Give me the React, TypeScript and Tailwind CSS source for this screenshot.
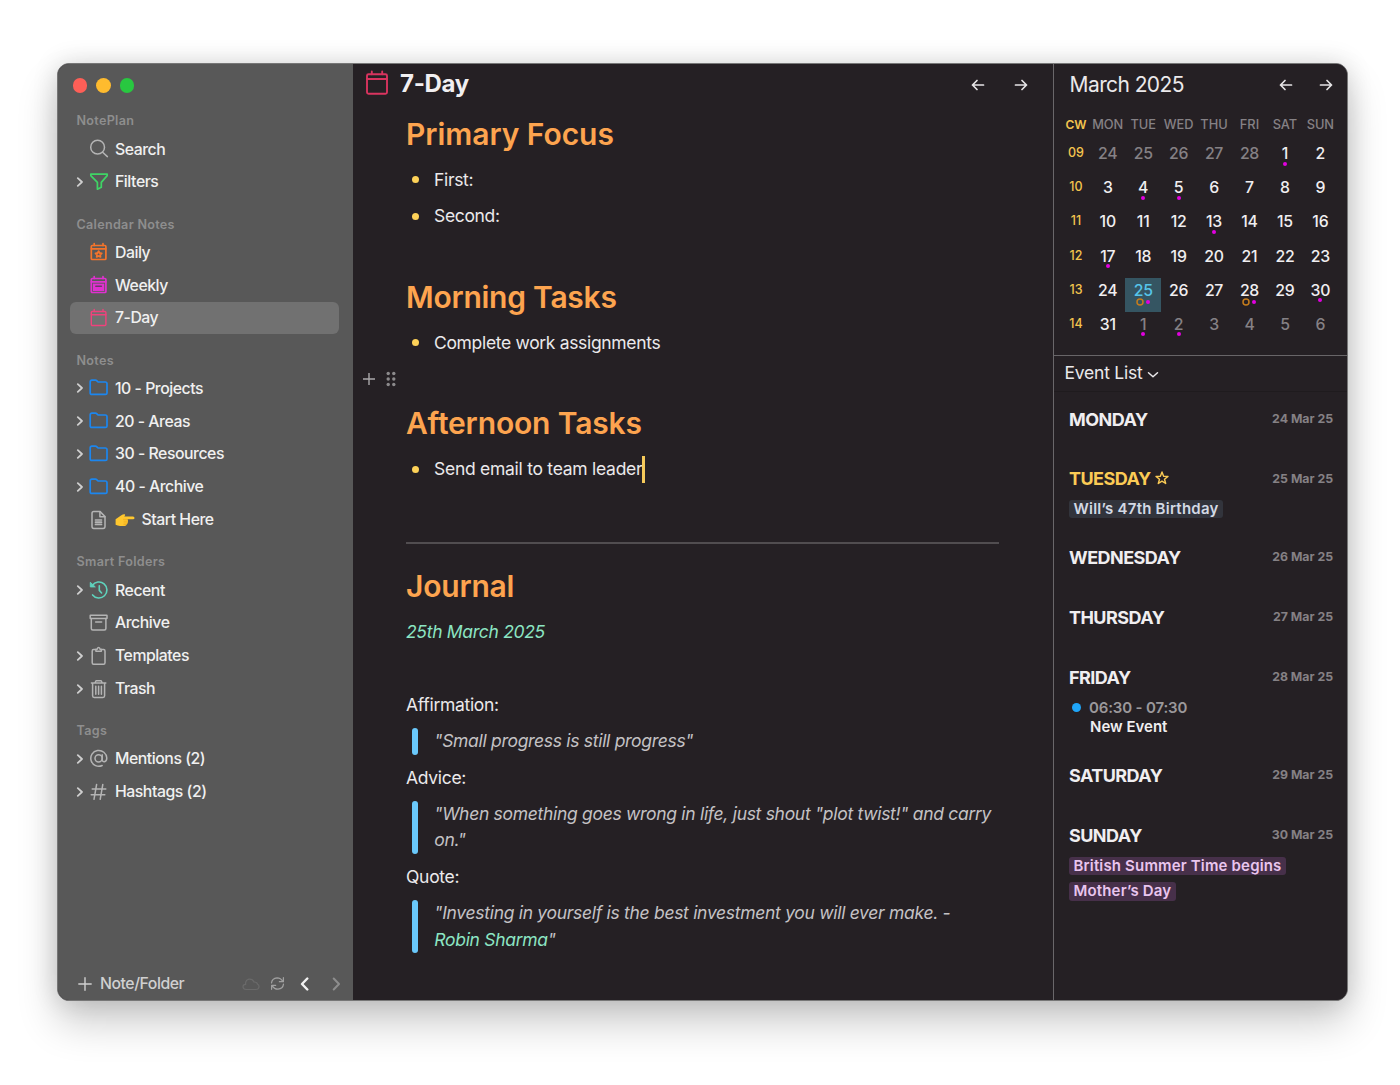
import React from "react";

type IconProps = { className?: string };

const Chevron = ({ className = "" }: IconProps) => (
  <svg viewBox="0 0 8 12" className={className} fill="none" stroke="currentColor" strokeWidth="1.8" strokeLinecap="round" strokeLinejoin="round">
    <path d="M1.8 2.2 6 6 1.8 9.8" />
  </svg>
);

const svgBase = {
  viewBox: "0 0 20 20",
  fill: "none",
  stroke: "currentColor",
  strokeWidth: 1.5,
  strokeLinecap: "round" as const,
  strokeLinejoin: "round" as const,
};

const icons: Record<string, React.ReactNode> = {
  search: (
    <svg {...svgBase} className="size-5 text-[#b4b4b4]">
      <circle cx="8.6" cy="8.2" r="6.9" />
      <path d="M13.6 13.2 18.4 17.6" />
    </svg>
  ),
  filter: (
    <svg {...svgBase} strokeWidth="1.7" className="size-5 text-[#3fd465]">
      <path d="M1.8 2.2H18.2V3.6L12.3 10.4V15.2L8.4 17.2V10.4L1.8 3.6Z" />
    </svg>
  ),
  daily: (
    <svg {...svgBase} strokeWidth="1.7" className="size-5 text-[#f4742b]">
      <rect x="2.3" y="3.5" width="14.6" height="14" rx="1" />
      <path d="M2.3 6.8H16.900M5.200 1.500V3.500M14 1.500V3.500" />
      <path d="m9.600 9.100 1 1.900 2.100.3-1.500 1.500.3 2.100L9.600 14l-1.900.9.3-2.100-1.500-1.500 2.100-.3Z" strokeWidth="1.800" />
    </svg>
  ),
  weekly: (
    <svg {...svgBase} strokeWidth="1.7" className="size-5 text-[#df31cf]">
      <rect x="2.3" y="3.5" width="14.6" height="14" rx="1" />
      <path d="M2.3 6.8H16.900M5.200 1.500V3.500M14 1.500V3.500" />
      <rect x="3.900" y="8.600" width="11.400" height="7.400" fill="currentColor" stroke="none" />
      <path d="M6.800 11.200H12.400" stroke="#6a3868" strokeWidth="1.500" />
    </svg>
  ),
  sevenDay: (
    <svg {...svgBase} strokeWidth="1.4" className="size-5 text-[#f0427c]">
      <rect x="2.3" y="3.5" width="14.6" height="14" rx="1" />
      <path d="M2.3 6.8H16.900M5.200 1.500V3.500M14 1.500V3.500" />
    </svg>
  ),
  folder: (
    <svg {...svgBase} strokeWidth="1.7" className="size-5 text-[#1c86ee]">
      <path d="M1.2 14.9V3.9Q1.2 2.2 2.9 2.2H6.5Q7.3 2.2 7.9 2.8L9.1 4H16.3Q18 4 18 5.7V14.9Q18 16.4 16.4 16.4H2.8Q1.2 16.4 1.2 14.9Z" />
    </svg>
  ),
  doc: (
    <svg {...svgBase} className="size-5 text-[#b4b4b4]">
      <path d="M4.700 1.600H11.100L16 6.500V16.600Q16 18.400 14.200 18.400H4.700Q3 18.400 3 16.600V3.400Q3 1.600 4.700 1.600Z" />
      <path d="M10.900 1.800V6.700H15.800" />
      <path d="M6.500 10H12.500M6.500 12.200H12.500M6.500 14.400H12.500" strokeWidth="1.700" />
    </svg>
  ),
  recent: (
    <svg {...svgBase} strokeWidth="1.6" className="size-5 text-[#5fd3bd]">
      <path d="M3.3 5.500A8 8 0 1 1 3.600 14.900" />
      <path d="M1.300 2.700V6.900H5.900Z" fill="currentColor" strokeWidth="1" />
      <path d="M10.300 5.800V10.400L12.600 13" />
    </svg>
  ),
  archive: (
    <svg {...svgBase} className="size-5 text-[#b4b4b4]">
      <rect x="1.200" y="2.200" width="16.800" height="3.400" rx=".4" />
      <path d="M2.300 5.600V15.600Q2.300 17.100 3.800 17.100H15.400Q16.900 17.100 16.900 15.600V5.600" />
      <path d="M6.600 9.100H12.600" />
    </svg>
  ),
  template: (
    <svg {...svgBase} className="size-5 text-[#b4b4b4]">
      <path d="M6.600 3.500H4.600Q3.200 3.500 3.200 5V16.800Q3.200 18.300 4.600 18.300H14.600Q16 18.300 16 16.800V5Q16 3.500 14.600 3.500H12.600" />
      <path d="M6.900 5.200V3.300H8.200Q8.300 1.400 9.600 1.400T11 3.300H12.300V5.200Z" />
    </svg>
  ),
  trash: (
    <svg {...svgBase} className="size-5 text-[#b4b4b4]">
      <path d="M2.400 4.100H16.800M5.900 4 7 1.700H12.200L13.300 4M3.600 4.300V16.700Q3.600 18.400 5.200 18.400H14Q15.600 18.400 15.600 16.700V4.300" />
      <path d="M6.800 7.300V15.200M9.600 7.300V15.200M12.400 7.300V15.200" />
    </svg>
  ),
  at: (
    <svg {...svgBase} className="size-5 text-[#b4b4b4]">
      <circle cx="9.600" cy="9.300" r="3.600" />
      <path d="M13.200 5.800V10.600Q13.400 12.900 15.400 12.700Q17.800 12.300 17.800 9.100A8 7.900 0 1 0 13.200 16.500" />
    </svg>
  ),
  hash: (
    <svg {...svgBase} className="size-5 text-[#b4b4b4]">
      <path d="M3.200 6.900H16.800M2.200 12.800H15.800M7.600 2.500 5 17.300M13.800 2.500 11.200 17.300" />
    </svg>
  ),
};

const PointingHand = () => (
  <svg viewBox="0 0 20 14" className="mr-[6.5px] h-[14px] w-5">
    <path d="M.6 6.200 6 2.600Q8.500.700 9.800 1.300Q10.700 2 9.500 3.300L9.200 3.600H18Q19.500 3.800 19.500 4.900T18 6.300H12.300Q13.400 7 12.900 8 13.400 9 12.500 9.900 12.600 11 11.600 11.500 11.400 12.700 9.800 12.900H5Q2.500 12.900.6 11.800Z" fill="#ffc72e" />
    <path d="M8 6.300H12.300M8.600 8.200H12.700M8.600 10H12.200M8.400 11.600H11.400" stroke="#e49a16" strokeWidth=".5" fill="none" />
  </svg>
);

type Item = { label: string; icon: string; chev?: boolean; active?: boolean; hand?: boolean };

const sections: { title: string; items: Item[] }[] = [
  { title: "NotePlan", items: [
    { label: "Search", icon: "search" },
    { label: "Filters", icon: "filter", chev: true },
  ] },
  { title: "Calendar Notes", items: [
    { label: "Daily", icon: "daily" },
    { label: "Weekly", icon: "weekly" },
    { label: "7-Day", icon: "sevenDay", active: true },
  ] },
  { title: "Notes", items: [
    { label: "10 - Projects", icon: "folder", chev: true },
    { label: "20 - Areas", icon: "folder", chev: true },
    { label: "30 - Resources", icon: "folder", chev: true },
    { label: "40 - Archive", icon: "folder", chev: true },
    { label: "Start Here", icon: "doc", hand: true },
  ] },
  { title: "Smart Folders", items: [
    { label: "Recent", icon: "recent", chev: true },
    { label: "Archive", icon: "archive" },
    { label: "Templates", icon: "template", chev: true },
    { label: "Trash", icon: "trash", chev: true },
  ] },
  { title: "Tags", items: [
    { label: "Mentions (2)", icon: "at", chev: true },
    { label: "Hashtags (2)", icon: "hash", chev: true },
  ] },
];

function Sidebar() {
  return (
    <aside className="flex w-[295px] shrink-0 flex-col bg-[#585858]">
      <div className="flex h-[31px] items-end gap-[9px] pb-[2.500px] pl-[14.6px]">
        <span className="size-[14.5px] rounded-full bg-[#fe5f57]" />
        <span className="size-[14.5px] rounded-full bg-[#febb2e]" />
        <span className="size-[14.5px] rounded-full bg-[#28c840]" />
      </div>
      <nav>
        {sections.map((s) => (
          <section key={s.title}>
            <h3 className="flex h-[37.7px] items-center pt-[16px] pl-[18.5px] text-[12.6px] font-semibold tracking-[0.3px] text-[#8e8e8e]">{s.title}</h3>
            {s.items.map((it) => (
              <div
                key={it.label}
                className={`mr-[14px] ml-[12px] flex h-[32.8px] items-center rounded-[6px] text-[15.8px] font-medium tracking-[-0.46px] text-[#f0f0f0] ${it.active ? "bg-[#717171]" : ""}`}
              >
                <span className="flex w-[19px] justify-center text-[#cfcfcf]">
                  {it.chev && <Chevron className="h-3 w-2" />}
                </span>
                <span className="mr-[6px]">{icons[it.icon]}</span>
                {it.hand && <PointingHand />}
                <span className="pt-[0.600px]">{it.label}</span>
              </div>
            ))}
          </section>
        ))}
      </nav>
      <footer className="mt-auto flex h-[33px] items-center pr-[12px] pl-[20px] text-[#d0d0d0]">
        <svg viewBox="0 0 14 14" className="size-[14px]" stroke="currentColor" strokeWidth="1.4" strokeLinecap="round"><path d="M7 .8V13.200M.8 7H13.200" /></svg>
        <span className="ml-[8px] pt-[1px] text-[15.8px] font-medium tracking-[-0.46px]">Note/Folder</span>
        <span className="ml-auto flex items-center">
          <svg viewBox="0 0 18 14" className="mr-[9.500px] h-[14px] w-[18px] text-[#6a6a6a]" fill="none" stroke="currentColor" strokeWidth="1.200"><path d="M4 12.500Q1 12.300 1 9.800T3.600 7.300Q3.300 3 7 2.200 10.500 1.900 12 5 15 4.800 15.600 7.300 17.200 8 17 10 16.600 12.500 14 12.500Z" /></svg>
          <svg viewBox="0 0 16 16" className="mr-[15.500px] size-[15px] text-[#a0a0a0]" fill="none" stroke="currentColor" strokeWidth="1.300" strokeLinecap="round" strokeLinejoin="round"><path d="M1.600 7.300Q2.200 2.400 7.500 1.900 11.500 1.900 13.600 5.700M14.300 1.800V6H10M14.400 8.700Q13.800 13.600 8.500 14.100 4.500 14.100 2.400 10.300M1.700 14.200V10H6" /></svg>
          <svg viewBox="0 0 9 14" className="mr-[23px] h-[14px] w-[9px] text-[#f2f2f2]" fill="none" stroke="currentColor" strokeWidth="2.400" strokeLinecap="round" strokeLinejoin="round"><path d="M7.300 1.500 2 7 7.300 12.500" /></svg>
          <svg viewBox="0 0 9 14" className="h-[14px] w-[9px] text-[#8d8d8d]" fill="none" stroke="currentColor" strokeWidth="2" strokeLinecap="round" strokeLinejoin="round"><path d="M1.700 1.500 7 7 1.700 12.500" /></svg>
        </span>
      </footer>
    </aside>
  );
}

const Arrow = ({ right = false }: { right?: boolean }) => (
  <svg viewBox="0 0 14 12" className={`h-[12px] w-[14px] text-[#e6e4e6] ${right ? "-scale-x-100" : ""}`} fill="none" stroke="currentColor" strokeWidth="1.700" strokeLinecap="round" strokeLinejoin="round">
    <path d="M12.500 6H1.500M6 1.500 1.500 6 6 10.500" />
  </svg>
);

const Heading = ({ children, track = "tracking-[-0.15px]" }: { children: React.ReactNode; track?: string }) => (
  <h2 className={`flex h-[53.5px] items-center pb-[1px] text-[30px] font-semibold text-[#fda44f] ${track}`}>{children}</h2>
);

const Bullet = ({ children, caret = false }: { children: React.ReactNode; caret?: boolean }) => (
  <div className="flex h-[36.5px] items-center">
    <span className="mr-[15px] ml-[6px] size-[7px] rounded-full bg-[#fdd158]" />
    <span className={caret ? "tracking-[-0.27px]" : "tracking-[-0.33px]"}>{children}</span>
    {caret && <span className="mt-[1px] h-[27px] w-[2.500px] bg-[#f5c95a]" />}
  </div>
);

const Para = ({ children }: { children?: React.ReactNode }) => <p className="flex h-[36.450px] items-center">{children}</p>;

const Quote = ({ children }: { children: React.ReactNode }) => (
  <blockquote className="my-[5px] ml-[6px] flex text-[#c4c2c4] italic">
    <span className="mr-[16.300px] w-[6px] shrink-0 rounded-[3px] bg-[#6ac8fb]" />
    <span className="leading-[26.400px]">{children}</span>
  </blockquote>
);

function Editor() {
  return (
    <main className="w-[700px] shrink-0 bg-[#252024] text-[17.500px] tracking-[-0.3px] text-[#ebe9eb]">
      <header className="flex h-[44px] items-center pr-[25px] pb-[5px] pl-[12px]">
        <svg viewBox="0 0 24 26" className="mb-[1px] h-[26px] w-[24px] text-[#d9345f]" fill="none" stroke="currentColor" strokeWidth="1.900" strokeLinecap="round">
          <rect x="2" y="4.200" width="20" height="19.500" rx="1.500" />
          <path d="M2 9H22M6.800 1.500V4.200M17.200 1.500V4.200" />
        </svg>
        <h1 className="ml-[11px] text-[24px] font-bold text-[#f1eff1]">7-Day</h1>
        <div className="mt-[3px] ml-auto flex gap-[29.500px]"><Arrow /><Arrow right /></div>
      </header>
      <article className="pt-[0.150px] pr-[54px] pl-[53px]">
        <Heading track="tracking-[-0.05px]">Primary Focus</Heading>
        <Bullet>First:</Bullet>
        <Bullet>Second:</Bullet>
        <Para />
        <Heading track="tracking-[-0.250px]">Morning Tasks</Heading>
        <Bullet>Complete work assignments</Bullet>
        <div className="-ml-[43px] flex h-[36.300px] items-center text-[#aaa8aa]">
          <svg viewBox="0 0 12 12" className="size-[12px]" stroke="currentColor" strokeWidth="1.400"><path d="M6 0V12M0 6H12" /></svg>
          <svg viewBox="0 0 10 16" className="ml-[10.500px] h-[16px] w-[10px]" fill="#8c8a8c">
            {[2.500, 8, 13.500].map((y) => (
              <React.Fragment key={y}>
                <circle cx="2.200" cy={y} r="1.700" />
                <circle cx="7.800" cy={y} r="1.700" />
              </React.Fragment>
            ))}
          </svg>
        </div>
        <Heading>Afternoon Tasks</Heading>
        <Bullet caret>Send email to team leader</Bullet>
        <Para />
        <div className="flex h-[36.450px] items-center pt-[2.400px]"><hr className="w-full border-t-2 border-[#514d50]" /></div>
        <Heading track="tracking-[-0.200px]">Journal</Heading>
        <p className="flex h-[36.500px] items-center text-[#8ce5c3] italic">25th March 2025</p>
        <Para />
        <Para>Affirmation:</Para>
        <Quote>"Small progress is still progress"</Quote>
        <Para>Advice:</Para>
        <Quote>"When something goes wrong in life, just shout "plot twist!" and carry<br />on."</Quote>
        <Para>Quote:</Para>
        <Quote>"Investing in yourself is the best investment you will ever make. -<br /><span className="text-[#8ce5c3]">Robin Sharma</span>"</Quote>
      </article>
    </main>
  );
}

const weeks: { cw: string; days: number[] }[] = [
  { cw: "09", days: [24, 25, 26, 27, 28, 1, 2] },
  { cw: "10", days: [3, 4, 5, 6, 7, 8, 9] },
  { cw: "11", days: [10, 11, 12, 13, 14, 15, 16] },
  { cw: "12", days: [17, 18, 19, 20, 21, 22, 23] },
  { cw: "13", days: [24, 25, 26, 27, 28, 29, 30] },
  { cw: "14", days: [31, 1, 2, 3, 4, 5, 6] },
];
const dots = ["0-5", "1-1", "1-2", "2-3", "3-0", "4-1", "4-4", "4-6", "5-1", "5-2"];
const rings = ["4-1", "4-4"];
const isMuted = (w: number, d: number) => (w === 0 && d < 5) || (w === 5 && d > 0);

function Calendar() {
  return (
    <div className="h-[292px] border-b border-[#686568] pl-[8px]">
      <div className="flex h-[42px] items-center pr-[14px] pl-[7.600px]">
        <h2 className="text-[21px] tracking-[-0.600px] text-[#ebe9eb]">March 2025</h2>
        <div className="ml-auto flex gap-[26px]"><Arrow /><Arrow right /></div>
      </div>
      <div className="grid h-[35px] grid-cols-[28px_repeat(7,35.450px)] items-center pt-[2px] text-center text-[12.800px] font-medium text-[#858185]">
        <span className="text-[12px] font-semibold text-[#f3c44e]">CW</span>
        {["MON", "TUE", "WED", "THU", "FRI", "SAT", "SUN"].map((d) => <span key={d}>{d}</span>)}
      </div>
      {weeks.map((w, wi) => (
        <div key={w.cw} className="grid h-[34.200px] grid-cols-[28px_repeat(7,35.450px)] text-center">
          <span className="text-[12.500px] leading-[23.500px] font-medium text-[#f3c44e]">{w.cw}</span>
          {w.days.map((d, di) => {
            const key = `${wi}-${di}`;
            const today = key === "4-1";
            const ring = rings.includes(key);
            return (
              <div key={key} className={`flex flex-col items-center text-[15.800px] leading-[25px] font-medium tracking-[-0.250px] ${today ? "bg-[#355562] text-[#56c5ea]" : isMuted(wi, di) ? "text-[#858185]" : "text-[#f0eef0]"}`}>
                {d}
                {dots.includes(key) && (
                  <span className={`flex shrink-0 items-center gap-[2px] ${ring ? "-mt-[4.500px]" : "-mt-[4.500px]"}`}>
                    {ring && (
                      <svg viewBox="0 0 8 8" className="size-[8px]" fill="none" stroke="#c57c1c" strokeWidth="1.500"><circle cx="4" cy="4" r="3" /></svg>
                    )}
                    <span className="size-[4px] rounded-full bg-[#e200e0]" />
                  </span>
                )}
              </div>
            );
          })}
        </div>
      ))}
    </div>
  );
}

const Pill = ({ children, pink = false }: { children: React.ReactNode; pink?: boolean }) => (
  <div className={`h-[18.500px] w-fit rounded-[3px] px-[4.500px] text-[15px] leading-[18.500px] font-semibold ${pink ? "bg-[#47304a] tracking-[0.160px] text-[#e9c5ee]" : "bg-[#32343c] tracking-[0.230px] text-[#d3d9e4]"}`}>{children}</div>
);

const days: { name: string; date: string; today?: boolean; body?: React.ReactNode }[] = [
  { name: "MONDAY", date: "24 Mar 25" },
  { name: "TUESDAY", date: "25 Mar 25", today: true, body: <Pill>Will’s 47th Birthday</Pill> },
  { name: "WEDNESDAY", date: "26 Mar 25" },
  { name: "THURSDAY", date: "27 Mar 25" },
  {
    name: "FRIDAY",
    date: "28 Mar 25",
    body: (
      <div className="flex pl-[3px] text-[15px] leading-[19px] font-semibold">
        <span className="mt-[5px] mr-[8.500px] size-[8.500px] rounded-full bg-[#1fa5f8]" />
        <div><div className="tracking-[-0.150px] text-[#9b989b]">06:30 - 07:30</div><div className="pl-[1px] text-[#f0eef0]">New Event</div></div>
      </div>
    ),
  },
  { name: "SATURDAY", date: "29 Mar 25" },
  { name: "SUNDAY", date: "30 Mar 25", body: <div className="flex flex-col gap-[7px]"><Pill pink>British Summer Time begins</Pill><Pill pink>Mother’s Day</Pill></div> },
];

function RightPanel() {
  return (
    <aside className="min-w-0 flex-1 border-l border-[#6a676a] bg-[#252024]">
      <Calendar />
      <div className="flex h-[36px] items-center border-b border-[#1f1b1e] pl-[10.500px] text-[17.500px] tracking-[-0.230px] text-[#ebe9eb]">
        Event List
        <svg viewBox="0 0 12 8" className="mt-[3px] ml-[4.500px] h-[8px] w-[12px]" fill="none" stroke="currentColor" strokeWidth="1.500" strokeLinecap="round" strokeLinejoin="round"><path d="M1.500 1.800 6 5.800 10.500 1.800" /></svg>
      </div>
      <div className="pt-[15px] pr-[14px] pl-[15px]">
        {days.map((d) => (
          <div key={d.name} className={d.body ? "pb-[27.200px]" : "pb-[35.800px]"}>
            <div className="flex h-[24px] items-center">
              <h3 className={`text-[18px] font-bold tracking-[-0.550px] ${d.today ? "text-[#fbcb55]" : "text-[#f0eef0]"}`}>{d.name}</h3>
              {d.today && <svg viewBox="0 0 14 14" className="mb-[1px] ml-[5px] size-[14px] text-[#fbcb55]" fill="none" stroke="currentColor" strokeWidth="1.400" strokeLinejoin="round"><path d="m7 1 1.600 4.200 4.400.2-3.500 2.800 1.200 4.300L7 10.100l-3.700 2.400 1.200-4.300L1 5.400l4.400-.2Z" /></svg>}
              <span className="ml-auto text-[12.300px] font-bold text-[#858185]">{d.date}</span>
            </div>
            {d.body && <div className="pt-[9.200px]">{d.body}</div>}
          </div>
        ))}
      </div>
    </aside>
  );
}

export default function App() {
  return (
    <div className="h-[1085px] w-[1400px] overflow-hidden bg-white pt-[63px] pl-[57px] font-['Inter','Liberation_Sans',sans-serif]">
      <div className="flex h-[938px] w-[1291px] overflow-hidden rounded-[12px] border border-[#777] bg-[#252024] shadow-[0_22px_40px_rgba(0,0,0,0.2),0_0_26px_rgba(0,0,0,0.14)]">
        <Sidebar />
        <Editor />
        <RightPanel />
      </div>
    </div>
  );
}
